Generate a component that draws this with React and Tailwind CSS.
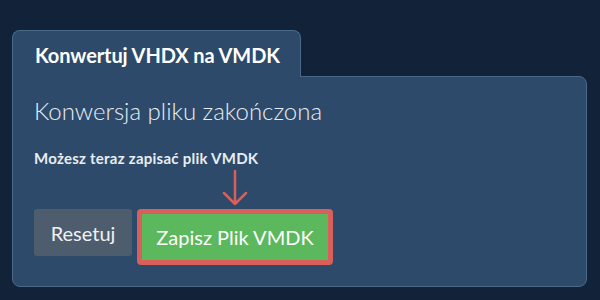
import React from 'react';

const App = () => {
  return (
    <div className="w-[600px] h-[300px] bg-[#112239] pt-[30px] pl-[12px] pr-[13px] font-['Lato','Liberation_Sans',sans-serif]">
      {/* Tab header */}
      <div className="w-[289px] h-[47px] bg-[#2d4a6a] border border-b-0 border-[#4a6888] rounded-t-[8px] pl-[22px] pt-[12px] relative z-10 -mb-px">
        <span className="block text-[20px] leading-[24px] font-bold text-white tracking-[-0.1px]">Konwertuj VHDX na VMDK</span>
      </div>

      {/* Panel body */}
      <div className="h-[211px] bg-[#2d4a6a] border border-[#4a6888] rounded-b-[8px] rounded-tr-[8px] pl-[21px] pt-[19px]">
        <h2 className="text-[24px] leading-[29px] font-light text-[#e8edf2]">Konwersja pliku zakończona</h2>
        <p className="mt-[24px] text-[15px] leading-[18px] font-bold text-[#e8edf2] tracking-[0.25px]">Możesz teraz zapisać plik VMDK</p>

        <div className="flex items-start gap-[5px] mt-[42px]">
          <button className="w-[98px] h-[47px] bg-[#4e5d6d] rounded-[3px] text-[20px] text-[#eef1f4]">
            Resetuj
          </button>
          <div className="relative">
            <svg width="26" height="36" viewBox="0 0 26 36" className="absolute left-[85px] -top-[39px]">
              <path d="M13 1 V34 M2 23 L13 34 L24 23" fill="none" stroke="#d9605a" strokeWidth="2.5" strokeLinecap="round" strokeLinejoin="round" />
            </svg>
            <button className="w-[196px] h-[56px] bg-[#5cb85c] border-[5px] border-[#d9605a] rounded-[4px] text-[20px] text-white">
              Zapisz Plik VMDK
            </button>
          </div>
        </div>
      </div>
    </div>
  );
};

export default App;
